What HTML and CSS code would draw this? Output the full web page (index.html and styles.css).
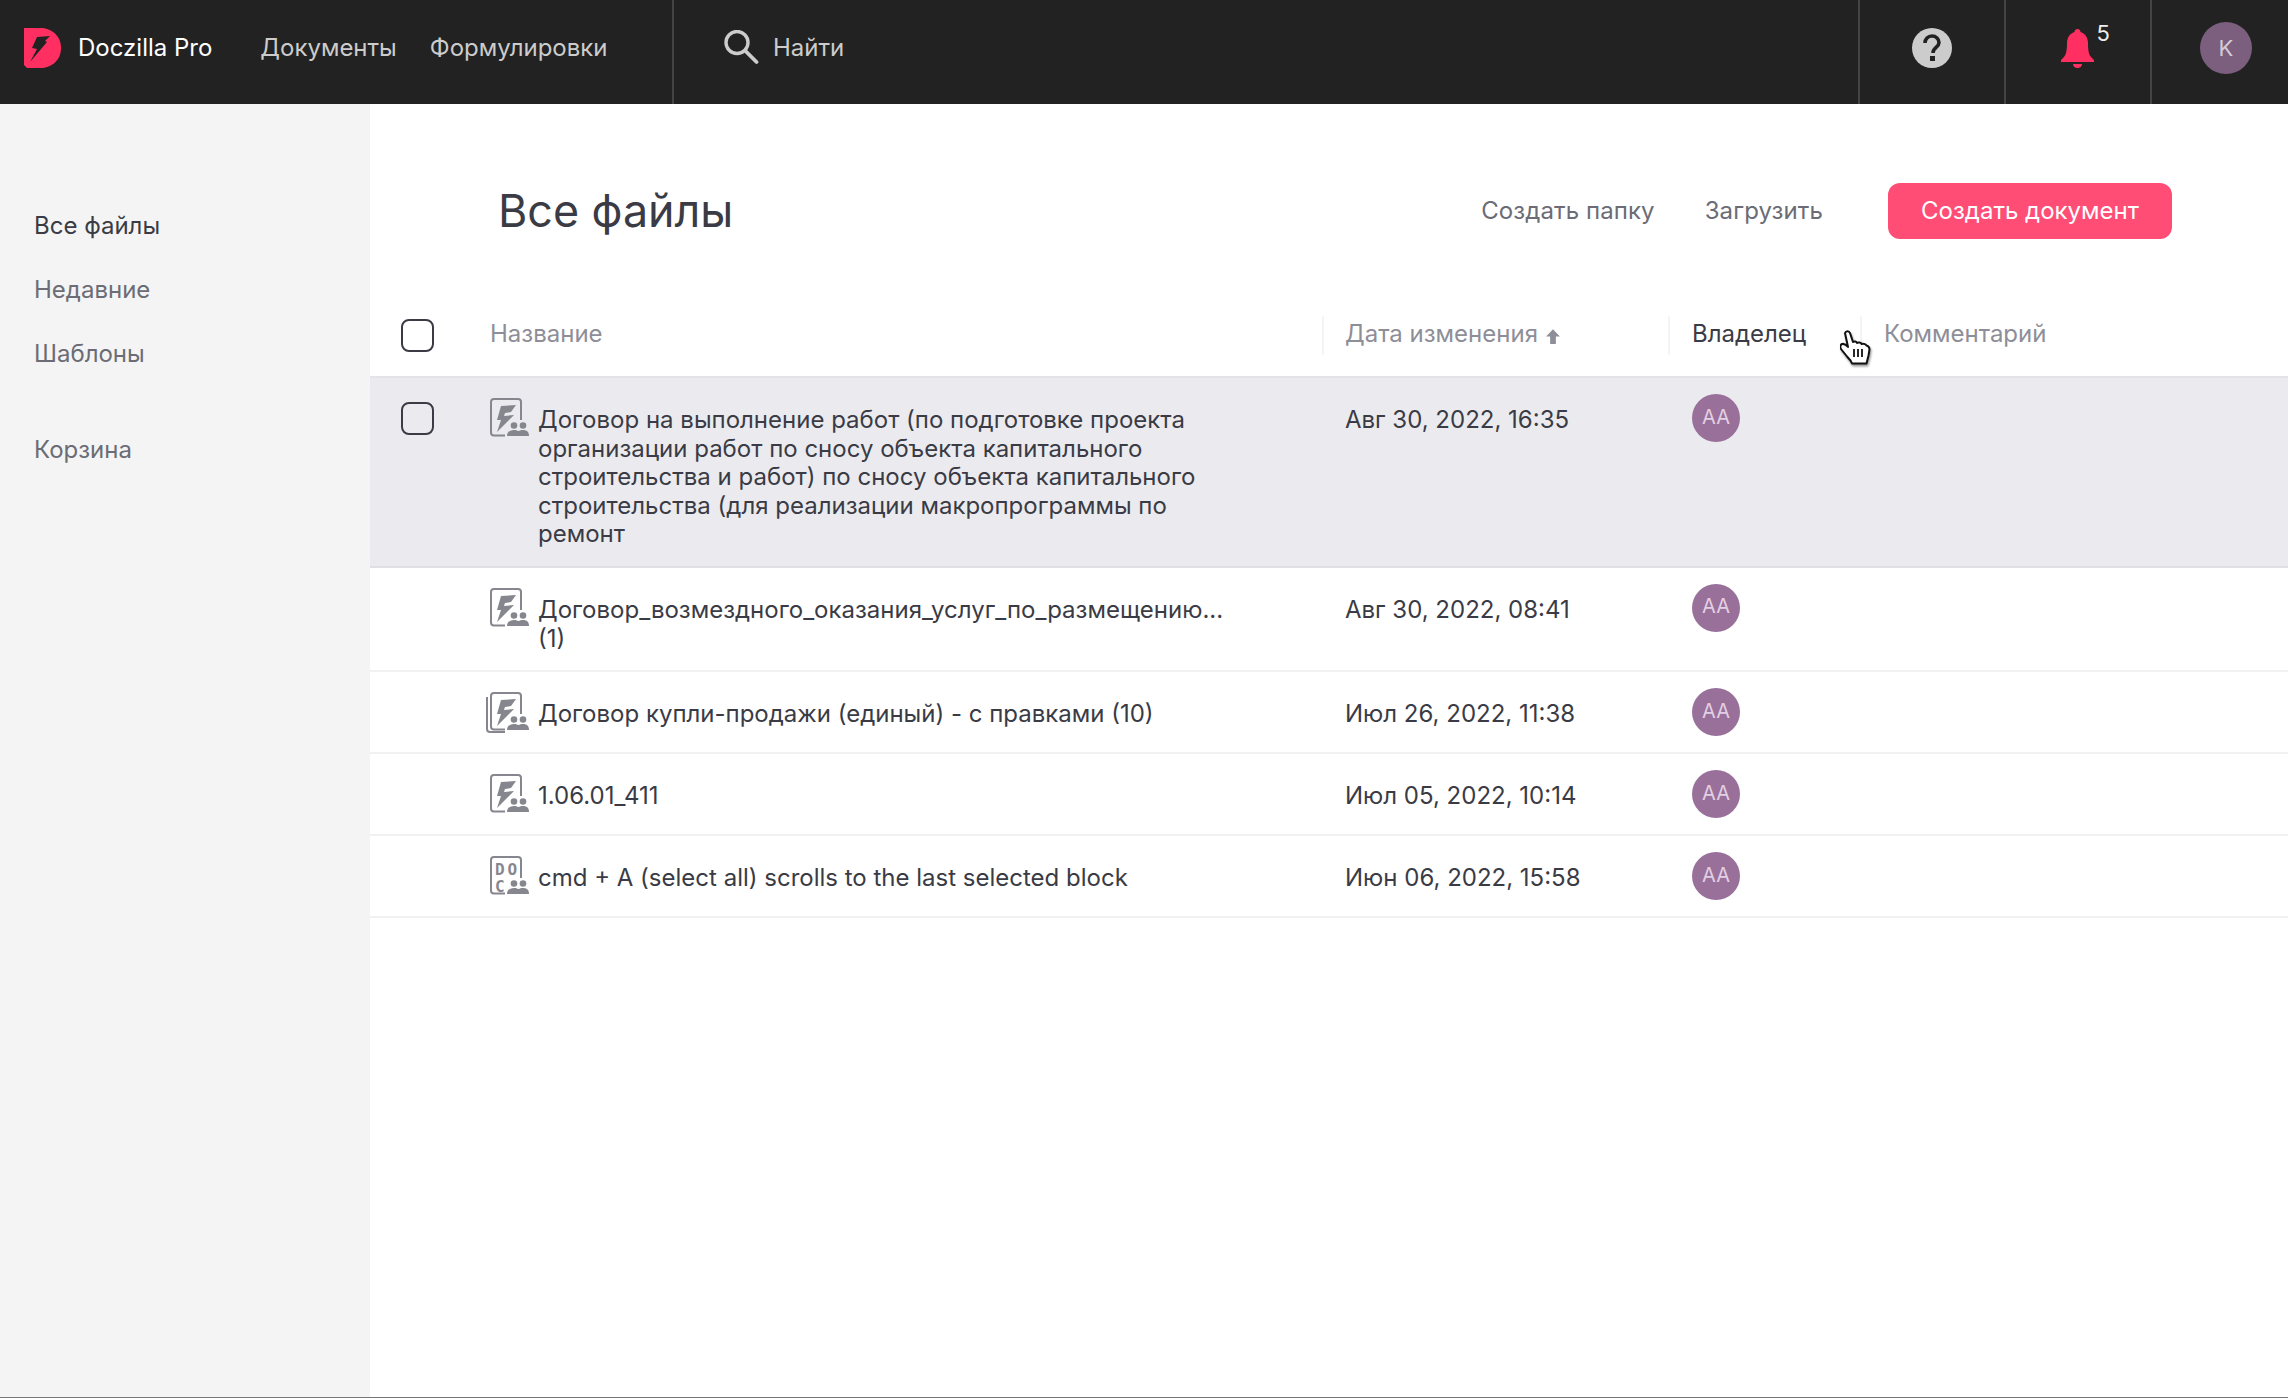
FILE: index.html
```html
<!DOCTYPE html>
<html lang="ru">
<head>
    <meta charset="UTF-8">
    <title>Все файлы - Doczilla Pro</title>
    <link rel="stylesheet" href="styles.css">
</head>
<body>
    <svg class="sprite" width="0" height="0">
        <symbol id="people" viewBox="0 0 42 42">
            <circle cx="24" cy="27.500" r="3.300"/>
            <circle cx="33" cy="27.500" r="3.300"/>
            <path d="M17 38c0-4 3-6 7-6 2 0 3 .5 4.500 1 1.500-.5 2.500-1 4.500-1 4 0 6 2 6 6z"/>
        </symbol>
        <symbol id="doc-frame" viewBox="0 0 42 42">
            <path d="M15 37.500H4a3 3 0 0 1-3-3V4a3 3 0 0 1 3-3h24a3 3 0 0 1 3 3v18" fill="none" stroke="currentColor" stroke-width="2"/>
        </symbol>
        <symbol id="bolt" viewBox="0 0 42 42">
            <path d="M11 8L26 7L21 14L15 15L14 18L24 17L7 34L11 22L7 22z"/>
        </symbol>
    </svg>

    <header class="topbar">
        <div class="brand-cell">
            <svg class="logo" viewBox="0 0 37 40">
                <path d="M0 0h16c12 0 21 8 21 20s-9 20-21 20H3l-3-3z" fill="#ff2f62"/>
                <path d="M13 9L26 8L21 13L23 14L6 34L13 21L8 20z" fill="#222"/>
            </svg>
            <a href="#" class="brand-name">Doczilla Pro</a>
            <nav class="top-nav">
                <a href="#">Документы</a>
                <a href="#">Формулировки</a>
            </nav>
        </div>
        <div class="search-cell">
            <svg class="search-icon" viewBox="0 0 36 36">
                <circle cx="14" cy="12.500" r="11" fill="none" stroke="#ccc" stroke-width="3.400"/>
                <path d="M22 20.500L33.500 32" stroke="#ccc" stroke-width="3.800" stroke-linecap="round"/>
            </svg>
            <span class="search-label">Найти</span>
        </div>
        <div class="icon-cell">
            <svg class="help-icon" viewBox="0 0 40 40">
                <circle cx="20" cy="20" r="20" fill="#ccc"/>
                <path d="M13 15c0-4 3-7 7-7s7 3 7 6.500c0 5-6 5-6 10.500" fill="none" stroke="#222" stroke-width="3.600"/>
                <rect x="18" y="28" width="5" height="5" fill="#222"/>
            </svg>
        </div>
        <div class="icon-cell">
            <span class="bell-wrap">
                <svg class="bell-icon" viewBox="0 0 33 39">
                    <path d="M16.500 0c2 0 3 1.500 3 3 5 1.500 7.500 6 7.500 11 0 6 .5 11 3 14l3 3v2H0v-2l3-3c2.500-3 3-8 3-14 0-5 2.500-9.500 7.500-11 0-1.500 1-3 3-3z" fill="#ff2f62"/>
                    <path d="M12 35h9c0 2.500-2 4-4.500 4S12 37.500 12 35z" fill="#ff2f62"/>
                </svg>
                <span class="bell-count">5</span>
            </span>
        </div>
        <div class="icon-cell icon-cell-last">
            <span class="user-avatar">K</span>
        </div>
    </header>

    <div class="page">
        <aside class="sidebar">
            <a href="#" class="side-link active">Все файлы</a>
            <a href="#" class="side-link">Недавние</a>
            <a href="#" class="side-link">Шаблоны</a>
            <a href="#" class="side-link side-link-trash">Корзина</a>
        </aside>

        <main class="content">
            <div class="title-bar">
                <h1 class="page-title">Все файлы</h1>
                <a href="#" class="action-link">Создать папку</a>
                <a href="#" class="action-link">Загрузить</a>
                <button class="create-btn">Создать документ</button>
            </div>

            <div class="table-head">
                <div class="check-cell"><span class="checkbox"></span></div>
                <div class="head-cell head-name">Название</div>
                <div class="head-cell head-date">Дата изменения<svg class="sort-arrow" viewBox="0 0 14 14"><path d="M7 1l6 6.500H9.500V14h-5V7.500H1z"/></svg></div>
                <div class="head-cell head-active">Владелец</div>
                <div class="head-cell">Комментарий</div>
            </div>

            <div class="file-row selected">
                <div class="check-cell"><span class="checkbox"></span></div>
                <div class="name-cell">
                    <svg class="file-icon" viewBox="0 0 42 42"><use href="#doc-frame"/><use href="#bolt"/><use href="#people"/></svg>
                    <span class="file-name">Договор на выполнение работ (по подготовке проекта организации работ по сносу объекта капитального строительства и работ) по сносу объекта капитального строительства (для реализации макропрограммы по ремонт</span>
                </div>
                <div class="date-cell">Авг 30, 2022, 16:35</div>
                <div class="owner-cell"><span class="owner-avatar">АА</span></div>
            </div>

            <div class="file-row">
                <div class="check-cell"></div>
                <div class="name-cell">
                    <svg class="file-icon" viewBox="0 0 42 42"><use href="#doc-frame"/><use href="#bolt"/><use href="#people"/></svg>
                    <span class="file-name">Договор_возмездного_оказания_услуг_по_размещению... (1)</span>
                </div>
                <div class="date-cell">Авг 30, 2022, 08:41</div>
                <div class="owner-cell"><span class="owner-avatar">АА</span></div>
            </div>

            <div class="file-row">
                <div class="check-cell"></div>
                <div class="name-cell">
                    <svg class="file-icon file-icon-stack" viewBox="-5 0 47 42"><path d="M-3 5v32a3 3 0 0 0 3 3h15" fill="none" stroke="currentColor" stroke-width="2"/><use href="#doc-frame" width="42" height="42"/><use href="#bolt" width="42" height="42"/><use href="#people" width="42" height="42"/></svg>
                    <span class="file-name">Договор купли-продажи (единый) - с правками (10)</span>
                </div>
                <div class="date-cell">Июл 26, 2022, 11:38</div>
                <div class="owner-cell"><span class="owner-avatar">АА</span></div>
            </div>

            <div class="file-row">
                <div class="check-cell"></div>
                <div class="name-cell">
                    <svg class="file-icon" viewBox="0 0 42 42"><use href="#doc-frame"/><use href="#bolt"/><use href="#people"/></svg>
                    <span class="file-name">1.06.01_411</span>
                </div>
                <div class="date-cell">Июл 05, 2022, 10:14</div>
                <div class="owner-cell"><span class="owner-avatar">АА</span></div>
            </div>

            <div class="file-row">
                <div class="check-cell"></div>
                <div class="name-cell">
                    <svg class="file-icon" viewBox="0 0 42 42">
                        <use href="#doc-frame"/><use href="#people"/>
                        <text x="5" y="19" class="doc-label">D</text>
                        <text x="17.500" y="19" class="doc-label">O</text>
                        <text x="5" y="36" class="doc-label">C</text>
                    </svg>
                    <span class="file-name">cmd + A (select all) scrolls to the last selected block</span>
                </div>
                <div class="date-cell">Июн 06, 2022, 15:58</div>
                <div class="owner-cell"><span class="owner-avatar">АА</span></div>
            </div>

            <svg class="hand-cursor" viewBox="0 0 33 35">
                <path d="M5 3c1-2.500 4-2.500 5 0l3 9c1.500-1 3.500-.5 4 1 1.500-1 4-.5 4.500 1 1.500-.5 4 0 5 1.500 2 .5 3 2 3 4l-1 6c-.5 2-1 4-2 8H12c-1-3-3-5-5-7L1 19c-1-2-1-4 1-5 2-.5 4 .5 6 3z" fill="#fff" stroke="#111" stroke-width="2" stroke-linejoin="round"/>
                <path d="M14 19v8M18 19v8M22 19v8" stroke="#111" stroke-width="1.800"/>
            </svg>
        </main>
    </div>
</body>
</html>
```
FILE: styles.css
```css
* { box-sizing: border-box; }
html, body { height: 100%; }
body { font-family: Inter, "Liberation Sans", sans-serif; margin: 0; background-color: #fff; color: #3a3b45; font-size: 24px; display: flex; flex-direction: column; border-bottom: 1px solid #777; }
a { text-decoration: none; color: inherit; }
.sprite { position: absolute; }

.topbar { display: flex; height: 104px; background-color: #222; color: #ccc; flex-shrink: 0; }
.brand-cell { display: flex; align-items: center; width: 674px; padding: 0 0 8px 24px; border-right: 2px solid #444; }
.logo { width: 37px; height: 40px; }
.brand-name { color: #fff; margin: 0 0 2px 17px; }
.top-nav { display: flex; gap: 33px; margin: 0 0 2px 48px; }
.search-cell { display: flex; align-items: center; flex: 1; padding: 0 0 8px 49px; gap: 14px; }
.search-icon { width: 36px; height: 36px; }
.search-label { margin-bottom: 2px; }
.icon-cell { display: flex; align-items: center; justify-content: center; width: 146px; padding-bottom: 8px; border-left: 2px solid #444; }
.icon-cell-last { width: 138px; justify-content: flex-start; padding-left: 48px; }
.help-icon { width: 40px; height: 40px; }
.bell-wrap { position: relative; display: flex; margin-left: -2px; }
.bell-icon { width: 33px; height: 39px; }
.bell-count { position: absolute; left: 36px; top: -9px; font-size: 22px; color: #eee; }
.user-avatar { display: flex; align-items: center; justify-content: center; width: 52px; height: 52px; border-radius: 50%; background-color: #7c5f7e; color: #d5cbd6; font-size: 22px; }

.page { display: flex; flex: 1; }
.sidebar { width: 370px; background-color: #f4f4f4; padding: 90px 0 0 34px; display: flex; flex-direction: column; }
.side-link { height: 64px; line-height: 64px; color: #6b6c75; }
.side-link.active { color: #3a3b45; }
.side-link-trash { margin-top: 32px; }

.content { flex: 1; position: relative; }
.title-bar { display: flex; align-items: center; padding: 79px 116px 0 128px; height: 196px; }
.title-bar > * { margin-bottom: 61px; }
.page-title { flex: 1; margin-top: 0; font-size: 44.800px; font-weight: 400; }
.action-link { color: #6b6c75; margin-right: 50px; padding-bottom: 2px; letter-spacing: .1px; }
.create-btn { height: 56px; width: 284px; margin-left: 15px; padding-bottom: 3px; background-color: #ff4d75; color: #fff; border: none; border-radius: 12px; font-family: inherit; font-size: 24px; cursor: pointer; }

.table-head, .file-row { display: grid; grid-template-columns: 120px 832px 346px 192px 1fr; border-bottom: 2px solid #f1f1f3; }
.table-head { height: 78px; padding-bottom: 6px; align-items: center; color: #8e8e98; border-bottom-color: #e4e4e8; }
.head-cell { height: 39px; line-height: 35px; padding-left: 22px; border-left: 2px solid #f4f4f6; }
.head-name { padding-left: 0; border-left: none; }
.head-date { padding-left: 21px; }
.head-active { color: #3a3b45; }
.sort-arrow { width: 16px; height: 16px; margin-left: 7px; fill: #8e8e98; vertical-align: -2px; }
.check-cell { display: flex; justify-content: flex-start; padding-left: 31px; }
.checkbox { display: block; width: 33px; height: 33px; border: 2px solid #3a3b45; border-radius: 8px; }

.file-row { padding: 16px 0; }
.file-row.selected { background-color: #ebebef; border-bottom-color: #e0e0e4; }
.selected .check-cell { padding-top: 8px; }
.name-cell { display: flex; align-items: flex-start; padding-top: 4px; }
.file-icon { width: 42px; height: 42px; flex-shrink: 0; fill: #86868f; color: #86868f; }
.file-icon-stack { width: 47px; margin-left: -5px; }
.doc-label { font-family: "DejaVu Sans Mono", monospace; font-size: 16px; font-weight: 700; }
.file-name { display: block; width: 690px; margin-left: 6px; padding: 8px 0 1px; line-height: 28.600px; }
.date-cell { padding: 12px 0 0 23px; line-height: 28.600px; }
.owner-cell { padding-left: 24px; }
.owner-avatar { display: flex; align-items: center; justify-content: center; width: 48px; height: 48px; border-radius: 50%; background-color: #987099; color: #e3cfe3; font-size: 20px; padding-bottom: 3px; }

.hand-cursor { position: absolute; left: 1470px; top: 226px; width: 33px; height: 35px; filter: drop-shadow(1px 2px 1px rgba(0,0,0,0.4)); }
```
